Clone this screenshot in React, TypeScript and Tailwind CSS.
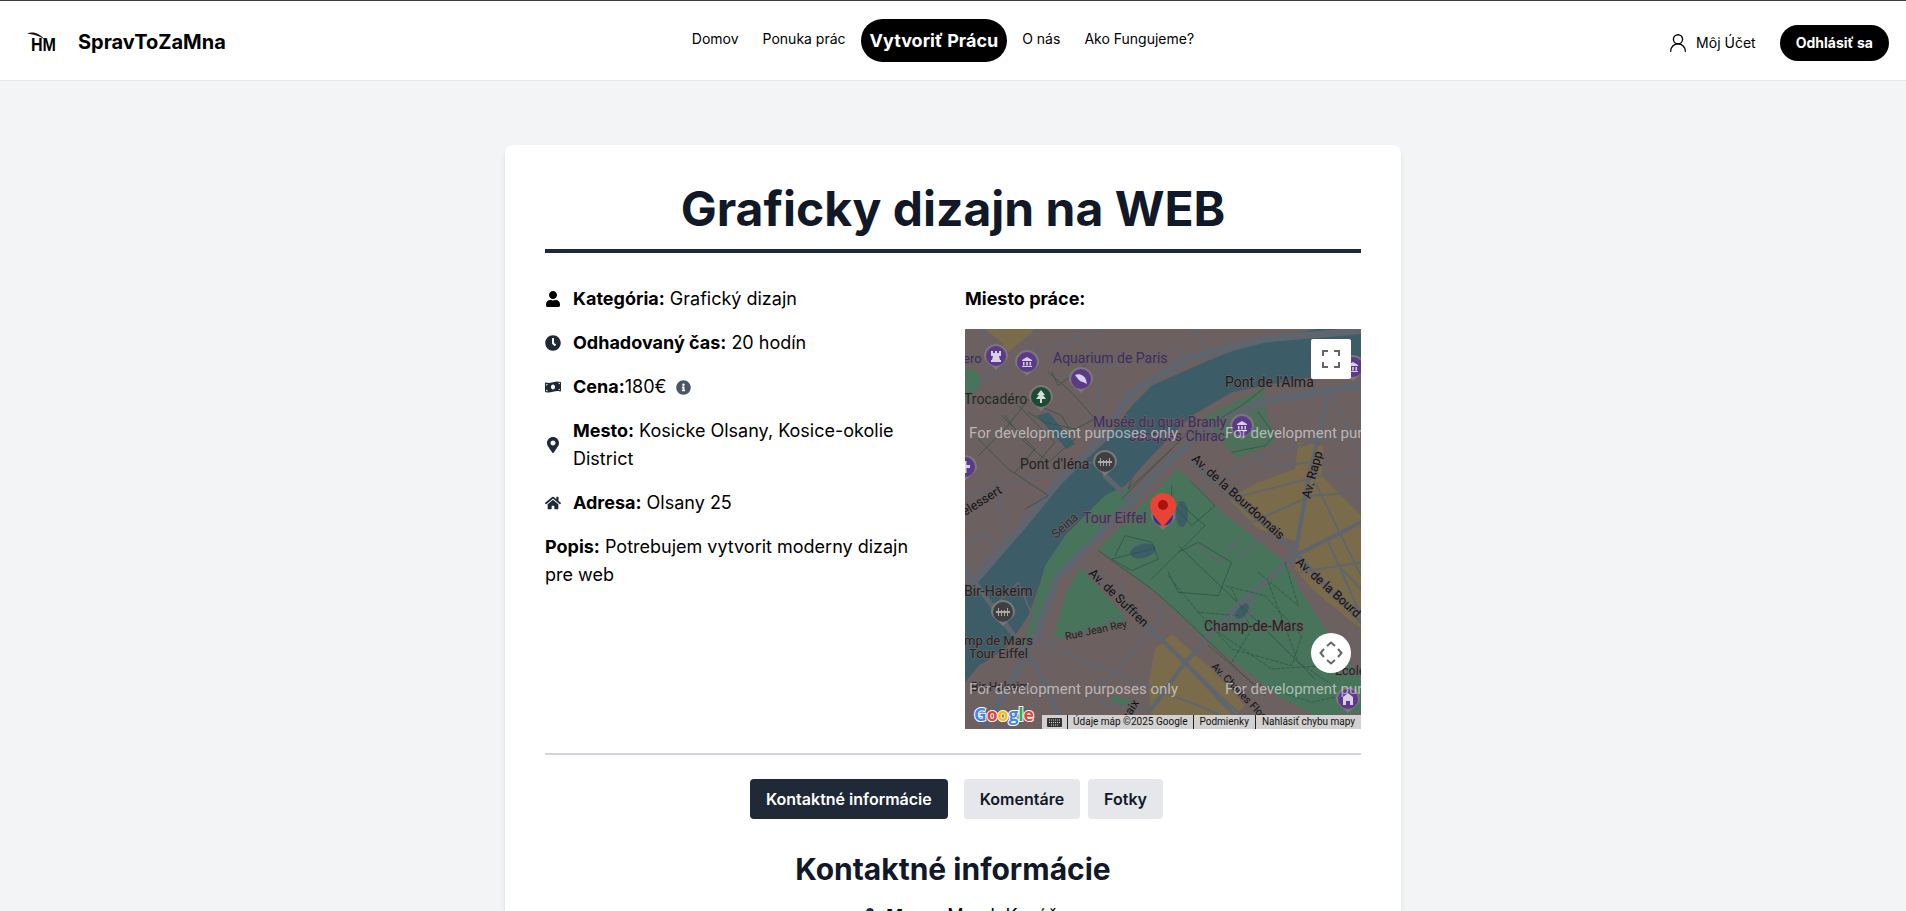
import { FaUser, FaClock, FaMoneyBillWave, FaMapMarkerAlt, FaHome, FaInfoCircle } from "react-icons/fa";
import { UserRound } from "lucide-react";

const s = (pts: number[][]) => pts.map((p) => `${p[0] / 3},${p[1] / 3}`).join(" ");

const mainRoads: [number[][], number][] = [
  [[[1188, 5], [900, 30], [680, 85], [500, 190], [400, 340], [280, 460], [130, 640], [0, 790]], 7],
  [[[1188, 170], [900, 215], [720, 300], [560, 450], [400, 620], [280, 740], [220, 900], [170, 1000], [60, 1200]], 7],
  [[[0, 720], [220, 1020], [300, 1200]], 5],
  [[[370, 720], [660, 1000], [820, 1170]], 4],
  [[[1188, 580], [990, 680], [820, 830], [660, 1000], [560, 1140]], 4],
  [[[680, 400], [980, 660], [1188, 880]], 3.5],
  [[[1090, 200], [1030, 450], [990, 680]], 4],
  [[[420, 440], [510, 525]], 5],
];

const thinRoads: number[][][] = [
  [[240, 950], [480, 860], [470, 760]],
  [[240, 950], [700, 1130], [860, 1200]],
  [[0, 500], [150, 460], [380, 400]],
  [[400, 330], [400, 100], [320, 0]],
  [[400, 110], [610, 80], [640, 130]],
  [[600, 50], [680, 85]],
  [[690, 0], [740, 90]],
  [[60, 0], [70, 140], [0, 210]],
  [[70, 150], [230, 60], [420, 0]],
  [[90, 450], [130, 640]],
  [[0, 650], [60, 610], [100, 660], [30, 720]],
  [[700, 480], [900, 380], [1188, 300]],
  [[880, 370], [910, 415], [1030, 400]],
  [[790, 510], [1070, 440], [1188, 430]],
  [[1050, 460], [1188, 740]],
  [[1110, 200], [1188, 400]],
  [[860, 580], [1040, 500], [1188, 490]],
  [[1090, 640], [1188, 860]],
  [[1000, 730], [1188, 700]],
  [[240, 950], [160, 760], [100, 820]],
  [[530, 780], [600, 860], [480, 1000], [360, 1120]],
  [[660, 1000], [840, 1170], [1050, 1190]],
  [[1120, 710], [1188, 780]],
  [[400, 1120], [560, 1140]],
  [[830, 620], [760, 700], [690, 640]],
  [[900, 620], [820, 690]],
];

const parkPaths: number[][][] = [
  [[400, 665], [560, 780], [640, 850], [900, 1100]],
  [[560, 750], [720, 590], [640, 520]],
  [[640, 650], [880, 880], [1050, 1050]],
  [[560, 660], [440, 690], [500, 725], [580, 690], [560, 640], [480, 620], [450, 680]],
  [[610, 730], [640, 790], [760, 800], [800, 700], [700, 640], [640, 670]],
  [[680, 460], [750, 530], [680, 590], [620, 520], [620, 470]],
  [[120, 260], [180, 340], [250, 400], [330, 330], [290, 260], [200, 220]],
  [[250, 130], [320, 190], [390, 270], [330, 300], [240, 280], [190, 250]],
  [[40, 330], [130, 420], [250, 500], [180, 540]],
  [[40, 380], [120, 300], [200, 200]],
  [[110, 260], [210, 360], [150, 430]],
  [[160, 230], [270, 340], [210, 410]],
  [[260, 130], [280, 170], [360, 110]],
  [[800, 370], [900, 350], [930, 320], [880, 250]],
  [[730, 290], [830, 230], [900, 175]],
  [[470, 510], [560, 420], [690, 290]],
  [[500, 450], [490, 480], [620, 360]],
];

const dashedPaths: number[][][] = [
  [[700, 850], [800, 960], [980, 1010], [1010, 920], [900, 800], [780, 770]],
  [[730, 950], [860, 1060], [1040, 1120], [1130, 1100]],
  [[880, 730], [1000, 830], [960, 700]],
  [[760, 910], [920, 1020], [1080, 1010]],
  [[910, 760], [1000, 1000], [1090, 1060]],
  [[800, 780], [860, 900], [800, 1000]],
  [[610, 740], [700, 850], [820, 860]],
];

function Pin({ x, y, fill = "#5b3a8c", glyph }: { x: number; y: number; fill?: string; glyph: string }) {
  return (
    <g transform={`translate(${x} ${y})`}>
      <path d="M-12 0 A12 12 0 1 1 12 0 C12 6 4 9 0 14 C-4 9 -12 6 -12 0Z" fill="#7c7778" />
      <circle r="10" fill={fill} />
      {glyph === "museum" && <path d="M-5 -2 L0 -5 L5 -2 V-1 H-5Z M-4 0 H-2.5 V3.5 H-4Z M-0.8 0 H0.8 V3.5 H-0.8Z M2.5 0 H4 V3.5 H2.5Z M-5 4 H5 V5 H-5Z" fill="#d9d0e6" />}
      {glyph === "tower" && <path d="M-5 -5 H-3 V-3 H-1 V-5 H1 V-3 H3 V-5 H5 V0 H3 L4 4 H5 V6 H-5 V4 H-4 L-3 0 H-5Z" fill="#d9d0e6" />}
      {glyph === "fish" && <path d="M-6 -4 C-1 -6 4 -3 5 1 L6 5 L2 3 C-1 3 -3 0 -6 -4Z" fill="#d9d0e6" />}
      {glyph === "tree" && <path d="M0 -7 L4 -2 H2 L5 2 H1 V6 H-1 V2 H-5 L-2 -2 H-4Z" fill="#cfe0d2" />}
      {glyph === "bridge" && <path d="M-7 -1 H7 V1 H-7Z M-5 -4 H-4 V4 H-5Z M4 -4 H5 V4 H4Z M-2 -2 H-1 V4 H-2Z M1 -2 H2 V4 H1Z" fill="#a9a9a9" />}
      {glyph === "cross" && <path d="M-1.5 -6 H1.5 V-2 H5 V1 H1.5 V6 H-1.5 V1 H-5 V-2 H-1.5Z" fill="#d9d0e6" />}
      {glyph === "castle" && <path d="M-5 6 V-2 L0 -6 L5 -2 V6 H2 V2 H-2 V6Z" fill="#d9d0e6" />}
    </g>
  );
}

function MapPicture() {
  const style = { fontFamily: "Roboto, sans-serif", paintOrder: "stroke" as const, stroke: "#6b6061", strokeWidth: 1.4 };
  const label = (t: string, x: number, y: number, size: number, fill: string, rot?: number) => (
    <text x={x} y={y} fontSize={size} fill={fill} transform={rot ? `rotate(${rot} ${x} ${y})` : undefined} style={style}>
      {t}
    </text>
  );
  return (
    <svg viewBox="0 0 396 400" width="396" height="400" className="block">
      <rect width="396" height="400" fill="#6c6061" />
      <polygon points={s([[60, 0], [210, 0], [130, 70], [110, 40]])} fill="#7a6b4b" />
      <polygon points={s([[1000, 340], [1075, 350], [1070, 440], [1188, 560], [1188, 900], [1040, 780], [990, 720], [1000, 640], [880, 600], [790, 510], [880, 460], [990, 420]])} fill="#7a6b4b" />
      <polygon points={s([[550, 1070], [570, 960], [620, 915], [740, 1020], [840, 1130], [800, 1170], [560, 1170]])} fill="#7a6b4b" />
      <polygon points={s([[0, 120], [40, 130], [50, 170], [0, 220]])} fill="#47745a" />
      <polygon points={s([[0, 810], [50, 1000], [0, 1060]])} fill="#3c5c68" />
      <polygon points={s([[1188, 0], [1060, 0], [900, 30], [740, 90], [560, 170], [500, 230], [420, 340], [300, 450], [180, 600], [0, 790], [0, 1030], [60, 1000], [130, 950], [190, 860], [240, 720], [300, 620], [420, 500], [480, 470], [560, 380], [680, 260], [800, 190], [1000, 150], [1188, 130]])} fill="#3c5c68" />
      <polygon points={s([[400, 660], [640, 420], [760, 540], [960, 700], [1010, 790], [1120, 960], [1188, 1040], [1188, 1150], [1050, 1160], [940, 1100], [720, 930], [560, 780]])} fill="#47745a" />
      <polygon points={s([[265, 925], [300, 800], [345, 715], [480, 860], [470, 885], [300, 925]])} fill="#47745a" />
      <polygon points={s([[240, 710], [300, 620], [420, 500], [480, 470], [520, 520], [400, 620], [280, 740], [220, 900], [170, 1000], [170, 960], [200, 860]])} fill="#47745a" />
      <polygon points={s([[720, 260], [900, 175], [900, 240], [930, 340], [820, 390], [760, 330]])} fill="#47745a" opacity="0.8" />
      <polygon points={s([[500, 460], [560, 400], [700, 270], [730, 290], [580, 440]])} fill="#6c6061" />
      <polygon points={s([[440, 1100], [520, 1120], [500, 1135], [445, 1120]])} fill="#47745a" />
      <ellipse cx={178} cy={222} rx={13} ry={7} fill="#3c5c68" transform="rotate(-15 178 222)" />
      <ellipse cx={217} cy={185} rx={6} ry={13} fill="#3c5c68" />
      <ellipse cx={277} cy={282} rx={5} ry={9} fill="#3c5c68" transform="rotate(40 277 282)" />
      <polygon points={s([[215, 260], [250, 250], [330, 345], [305, 360]])} fill="#3c5c68" />
      <g fill="none" strokeLinejoin="round" strokeLinecap="round">
        {thinRoads.map((r, i) => <polyline key={i} points={s(r)} stroke="#5e656e" strokeWidth="1.8" />)}
        {mainRoads.map(([r, w], i) => <polyline key={i} points={s(r)} stroke="#5e656e" strokeWidth={w} />)}
        {parkPaths.map((r, i) => <polyline key={i} points={s(r)} stroke="#2f5444" strokeWidth="0.8" />)}
        {dashedPaths.map((r, i) => <polyline key={i} points={s(r)} stroke="#2f5444" strokeWidth="0.8" strokeDasharray="3 2" />)}
      </g>
      <ellipse cx={277} cy={282} rx={8} ry={14} fill="none" stroke="#5e656e" strokeWidth="2.5" transform="rotate(40 277 282)" />

      <Pin x={31} y={27} glyph="tower" />
      <Pin x={62} y={33} glyph="museum" />
      <Pin x={116} y={50} glyph="fish" />
      <Pin x={76} y={68} fill="#1f4a38" glyph="tree" />
      <Pin x={0} y={138} glyph="cross" />
      <Pin x={140} y={133} fill="#3f3f42" glyph="bridge" />
      <Pin x={277} y={97} glyph="museum" />
      <Pin x={388} y={38} glyph="museum" />
      <Pin x={38} y={283} fill="#3f3f42" glyph="bridge" />
      <Pin x={383} y={370} glyph="castle" />
      <Pin x={198} y={187} fill="#33308f" glyph="none" />

      {label("ero", -2, 34, 13, "#3e2c62")}
      {label("Aquarium de Paris", 88, 34, 14, "#3e2c62")}
      {label("Trocadéro", -1, 75, 14, "#1f2a26")}
      {label("Pont de l'Alma", 260, 58, 14, "#1c1c1c")}
      {label("Musée du quai Branly", 128, 98, 14, "#3e2c62")}
      {label("Jacques Chirac", 164, 112, 14, "#3e2c62")}
      {label("Pont d'Iéna", 55, 140, 14, "#222")}
      {label("elessert", 0, 187, 12.5, "#111", -32)}
      {label("Seina", 91, 210, 12.5, "#1d3138", -42)}
      {label("Av. de la Bourdonnais", 226, 131, 12.5, "#111", 42)}
      {label("Av. de la Bourd", 330, 234, 12.5, "#111", 42)}
      {label("Av. Rapp", 345, 170, 12.5, "#111", -75)}
      {label("Tour Eiffel", 118, 194, 14, "#3e2c62")}
      {label("Bir-Hakeim", -1, 267, 14, "#222")}
      {label("Av. de Suffren", 123, 245, 12.5, "#111", 44)}
      {label("Rue Jean Rey", 101, 311, 10.5, "#222", -12)}
      {label("Champ-de-Mars", 239, 302, 14, "#222")}
      {label("mp de Mars", -1, 316, 13, "#222")}
      {label("Tour Eiffel", 4, 329, 13, "#222")}
      {label("Av. Charles Floq", 246, 338, 10.5, "#111", 46)}
      {label("Bir-Hakeim", 6, 362, 12, "#222")}
      {label("saix", 163, 392, 12, "#111", -58)}
      {label("Ecole", 370, 346, 12.5, "#222")}

      <g fontFamily="Roboto, sans-serif" fontSize="15" fill="#fff" fillOpacity="0.55">
        <text x="4" y="109">For development purposes only</text>
        <text x="260" y="109">For development purposes only</text>
        <text x="4" y="365">For development purposes only</text>
        <text x="260" y="365">For development purposes only</text>
      </g>

      <g transform="translate(198 200)">
        <path d="M0 0 C-2 -7 -13 -14 -13 -23 A13 13 0 1 1 13 -23 C13 -14 2 -7 0 0Z" fill="#ea4335" />
        <circle cy="-24" r="5" fill="#a8140f" />
      </g>

      <text x="9" y="392" fontFamily="'Open Sans', sans-serif" fontWeight="700" fontSize="17.5" stroke="#ffffff" strokeWidth="2" style={{ paintOrder: "stroke" }}>
        <tspan fill="#4285f4">G</tspan>
        <tspan fill="#ea4335">o</tspan>
        <tspan fill="#fbbc05">o</tspan>
        <tspan fill="#4285f4">g</tspan>
        <tspan fill="#34a853">l</tspan>
        <tspan fill="#ea4335">e</tspan>
      </text>
    </svg>
  );
}

function Row({ icon, children }: { icon: React.ReactNode; children: React.ReactNode }) {
  return (
    <div className="flex items-center gap-3">
      <span className="flex w-4 shrink-0 justify-center">{icon}</span>
      <p>{children}</p>
    </div>
  );
}

export default function App() {
  return (
    <div className="h-[911px] overflow-hidden border-t border-[#3c3c3c] bg-[#f3f4f6] text-black [font-family:Inter,sans-serif]">
      <header className="flex h-[80px] items-center border-b border-[#e5e7eb] bg-white pr-[17px]">
        <div className="flex items-center pt-[3px] pl-[27px]">
          <svg width="30" height="20" viewBox="0 0 30 20" className="mr-[21px]">
            <path d="M0 1.5 C6 -0.5 12 0.5 18 8 C13 4 8 2.5 0 1.5Z" fill="#111" />
            <text x="4" y="19" fontFamily="'Liberation Sans', sans-serif" fontWeight="700" fontSize="19" fill="#000" textLength="25" lengthAdjust="spacingAndGlyphs">HM</text>
          </svg>
          <span className="text-xl font-bold">SpravToZaMna</span>
        </div>
        <nav className="ml-[466px] flex items-start text-sm">
          <a className="mt-[10px]">Domov</a>
          <a className="mt-[10px] ml-6">Ponuka prác</a>
          <a className="ml-[15px] flex h-[43px] items-center rounded-full bg-black px-[9px] text-lg font-bold text-white">Vytvoriť Prácu</a>
          <a className="mt-[10px] ml-[15px]">O nás</a>
          <a className="mt-[10px] ml-6">Ako Fungujeme?</a>
        </nav>
        <div className="ml-auto flex items-center pt-1">
          <UserRound size={22} strokeWidth={1.5} className="mr-[7px]" />
          <span className="text-sm">Môj Účet</span>
          <button className="ml-6 h-9 rounded-full bg-black px-4 text-sm font-bold text-white">Odhlásiť sa</button>
        </div>
      </header>

      <main className="mx-auto mt-16 w-[896px] rounded-lg bg-white p-10 shadow-md">
        <h1 className="border-b-4 border-[#1f2937] pb-4 text-center text-5xl font-bold text-[#111827]">Graficky dizajn na WEB</h1>
        <div className="mt-8 grid grid-cols-2 gap-6 text-lg">
          <div className="space-y-4">
            <Row icon={<FaUser size={16} className="text-black" />}>
              <b className="font-bold">Kategória:</b> Grafický dizajn
            </Row>
            <Row icon={<FaClock size={16} className="text-[#1f2937]" />}>
              <b className="font-bold">Odhadovaný čas:</b> 20 hodín
            </Row>
            <div className="flex items-center gap-3">
              <span className="flex w-4 shrink-0 justify-center"><FaMoneyBillWave size={16} className="text-[#1f2937]" /></span>
              <p><b className="font-bold">Cena:</b>180€</p>
              <FaInfoCircle size={15} className="-ml-[3px] text-[#4b5563]" />
            </div>
            <Row icon={<FaMapMarkerAlt size={16} className="text-[#1f2937]" />}>
              <b className="font-bold">Mesto:</b> Kosicke Olsany, Kosice-okolie District
            </Row>
            <Row icon={<FaHome size={16} className="text-[#1f2937]" />}>
              <b className="font-bold">Adresa:</b> Olsany 25
            </Row>
            <p><b className="font-bold">Popis:</b> Potrebujem vytvorit moderny dizajn pre web</p>
          </div>
          <div>
            <p className="mb-4 font-bold">Miesto práce:</p>
            <div className="relative h-[400px] w-[396px] overflow-hidden">
              <MapPicture />
              <div className="absolute top-[10px] right-[10px] flex size-10 items-center justify-center rounded-[2px] bg-white">
                <svg width="18" height="18" viewBox="0 0 18 18" fill="none" stroke="#666" strokeWidth="2">
                  <path d="M1 6V1H6M12 1H17V6M17 12V17H12M6 17H1V12" />
                </svg>
              </div>
              <div className="absolute right-[10px] bottom-[56px] flex size-10 items-center justify-center rounded-full bg-white">
                <svg width="24" height="24" viewBox="0 0 24 24" fill="none" stroke="#666" strokeWidth="2">
                  <path d="M8 5L12 1.5L16 5M8 19L12 22.5L16 19M5 8L1.5 12L5 16M19 8L22.5 12L19 16" />
                </svg>
              </div>
              <div className="absolute right-0 bottom-0 flex h-[14px] items-center bg-[#d2d0d0] text-[10px] leading-[14px] text-[#111] [font-family:Roboto,sans-serif]">
                <span className="flex h-full w-[26px] items-center justify-center border-r border-[#222]">
                  <svg width="15" height="9" viewBox="0 0 15 9"><path d="M1 0H14a1 1 0 0 1 1 1V8a1 1 0 0 1-1 1H1a1 1 0 0 1-1-1V1a1 1 0 0 1 1-1Z" fill="#333" /><path d="M2 2H13M2 4.5H13M4 7H11" stroke="#ddd" strokeWidth="1" strokeDasharray="1 1" /></svg>
                </span>
                <span className="border-r border-[#222] px-[5px] whitespace-nowrap">Údaje máp ©2025 Google</span>
                <span className="border-r border-[#222] px-[6px] whitespace-nowrap">Podmienky</span>
                <span className="px-[6px] whitespace-nowrap">Nahlásiť chybu mapy</span>
              </div>
            </div>
          </div>
        </div>
        <hr className="mt-6 border-t-2 border-[#d1d5db]" />
        <div className="mt-6 flex justify-center gap-2 pl-[7px]">
          <button className="mr-2 h-10 rounded bg-[#1f2937] px-4 font-semibold text-white">Kontaktné informácie</button>
          <button className="h-10 rounded bg-[#e5e7eb] px-4 font-semibold text-[#111827]">Komentáre</button>
          <button className="h-10 rounded bg-[#e5e7eb] px-4 font-semibold text-[#111827]">Fotky</button>
        </div>
        <h2 className="mt-8 text-center text-3xl font-bold text-[#111827]">Kontaktné informácie</h2>
        <div className="mt-[15px] flex items-center justify-center gap-2 pl-[14px] text-lg">
          <FaUser size={16} className="text-[#1f2937]" />
          <p><b className="font-bold">Meno:</b> Marek Kováč</p>
        </div>
      </main>
    </div>
  );
}
